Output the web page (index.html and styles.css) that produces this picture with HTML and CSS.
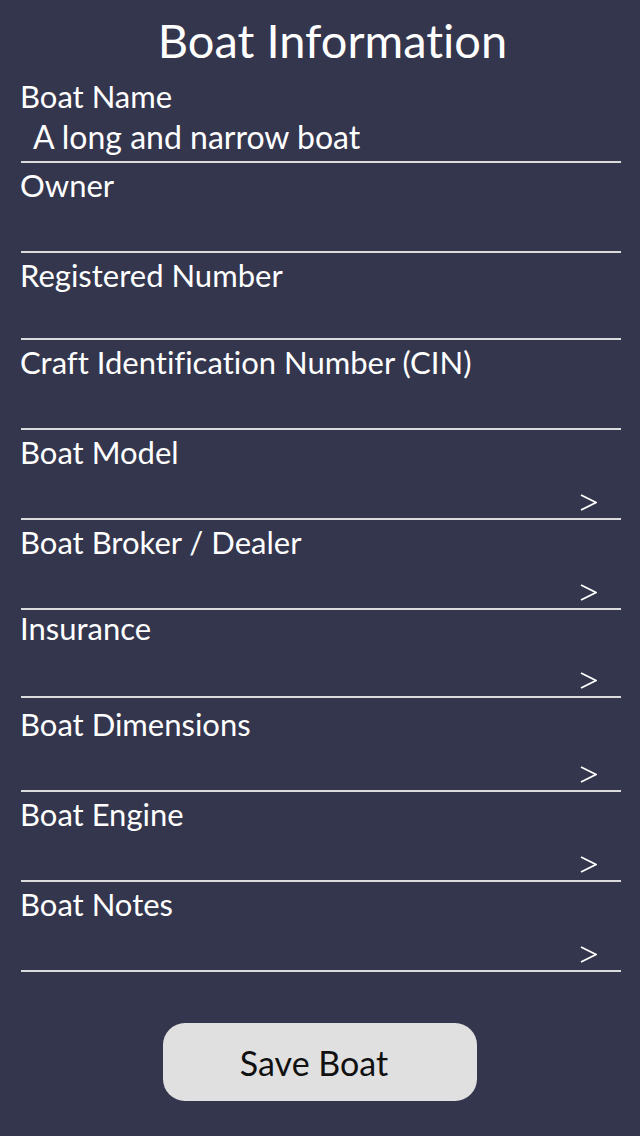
FILE: index.html
```html
<!DOCTYPE html>
<html lang="en">
<head>
<meta charset="utf-8">
<title>Boat Information</title>
<link rel="stylesheet" href="styles.css">
</head>
<body>
<main class="screen">
  <h1 class="title">Boat Information</h1>
  <form class="fields">
    <div class="field">
      <div class="label">Boat Name</div>
      <div class="entry"><span class="value">A long and narrow boat</span></div>
    </div>
    <div class="field">
      <div class="label">Owner</div>
      <div class="entry"></div>
    </div>
    <div class="field field--snug">
      <div class="label">Registered Number</div>
      <div class="entry"></div>
    </div>
    <div class="field">
      <div class="label">Craft Identification Number (CIN)</div>
      <div class="entry"></div>
    </div>
    <div class="field">
      <div class="label">Boat Model</div>
      <div class="entry entry--link"><svg class="chev" viewBox="0 0 17 17" aria-hidden="true"><polyline points="1,1 16,8.5 1,16"/></svg></div>
    </div>
    <div class="field">
      <div class="label">Boat Broker / Dealer</div>
      <div class="entry entry--link"><svg class="chev" viewBox="0 0 17 17" aria-hidden="true"><polyline points="1,1 16,8.5 1,16"/></svg></div>
    </div>
    <div class="field field--short">
      <div class="label">Insurance</div>
      <div class="entry entry--link"><svg class="chev" viewBox="0 0 17 17" aria-hidden="true"><polyline points="1,1 16,8.5 1,16"/></svg></div>
    </div>
    <div class="field field--tall">
      <div class="label">Boat Dimensions</div>
      <div class="entry entry--link"><svg class="chev" viewBox="0 0 17 17" aria-hidden="true"><polyline points="1,1 16,8.5 1,16"/></svg></div>
    </div>
    <div class="field">
      <div class="label">Boat Engine</div>
      <div class="entry entry--link"><svg class="chev" viewBox="0 0 17 17" aria-hidden="true"><polyline points="1,1 16,8.5 1,16"/></svg></div>
    </div>
    <div class="field">
      <div class="label">Boat Notes</div>
      <div class="entry entry--link"><svg class="chev" viewBox="0 0 17 17" aria-hidden="true"><polyline points="1,1 16,8.5 1,16"/></svg></div>
    </div>
  </form>
  <div class="actions">
    <button class="save" type="button">Save Boat</button>
  </div>
</main>
</body>
</html>
```

FILE: styles.css
```css
html, body {
  margin: 0;
  padding: 0;
}

body {
  background: #34364e;
  color: #ffffff;
  font-family: Lato, "Open Sans", "Liberation Sans", sans-serif;
  font-variant-ligatures: none;
}

.screen {
  width: 640px;
  height: 1136px;
  display: flex;
  flex-direction: column;
}

.title {
  margin: 17px 0 0 0;
  padding-left: 25px;
  font-size: 47px;
  line-height: 47px;
  font-weight: 400;
  text-align: center;
}

.fields {
  margin: 10px 19px 0 21px;
  display: flex;
  flex-direction: column;
}

.field {
  box-sizing: border-box;
  height: 90px;
  border-bottom: 2px solid #dcdcdc;
  padding-top: 7px;
  display: flex;
  flex-direction: column;
}

.field:first-child {
  height: 89px;
}

.field--snug {
  height: 87px;
}

.field--short {
  height: 88px;
  padding-top: 3px;
}

.field--tall {
  height: 94px;
  padding-top: 11px;
}

.label {
  font-size: 31px;
  line-height: 31px;
  margin-left: -1px;
}

.entry {
  margin-top: auto;
  height: 32px;
  padding-bottom: 8px;
  display: flex;
  align-items: flex-end;
}

.value {
  font-size: 32px;
  line-height: 32px;
  padding-left: 12px;
}

.entry--link {
  justify-content: flex-end;
  padding-right: 24px;
  padding-bottom: 7px;
}

.chev {
  width: 17px;
  height: 17px;
  fill: none;
  stroke: #ffffff;
  stroke-width: 1.9;
  stroke-linejoin: miter;
}

.actions {
  margin-top: 51px;
  display: flex;
  justify-content: center;
}

.save {
  width: 314px;
  height: 78px;
  border: none;
  border-radius: 22px;
  background: #e0e0e0;
  color: #111111;
  font-family: Lato, "Open Sans", "Liberation Sans", sans-serif;
  font-size: 34px;
  padding: 0 12px 0 0;
  cursor: pointer;
}
```
